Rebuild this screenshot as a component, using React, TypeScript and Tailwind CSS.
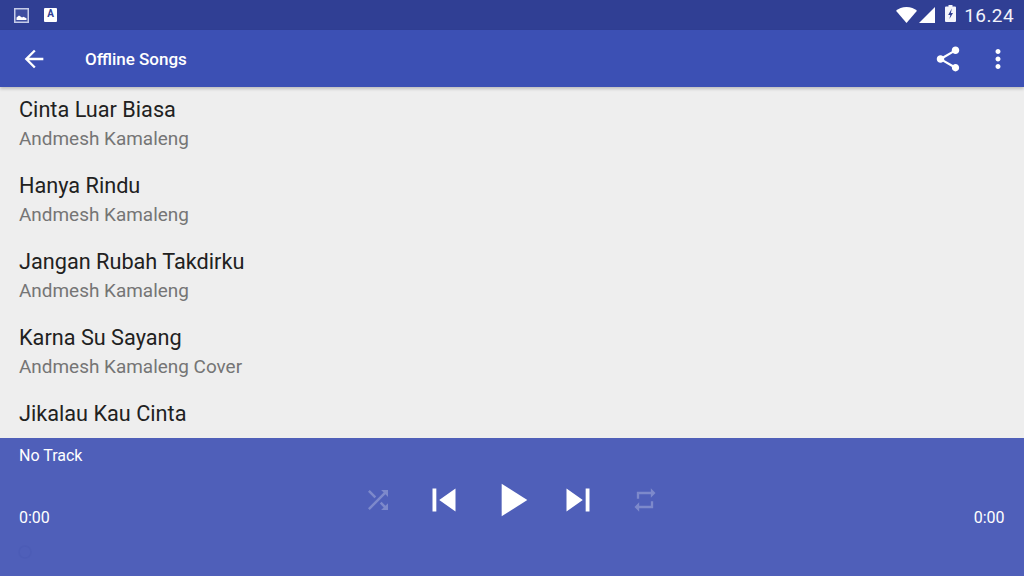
import React from "react";

const songs = [
  ["Cinta Luar Biasa", "Andmesh Kamaleng"],
  ["Hanya Rindu", "Andmesh Kamaleng"],
  ["Jangan Rubah Takdirku", "Andmesh Kamaleng"],
  ["Karna Su Sayang", "Andmesh Kamaleng Cover"],
  ["Jikalau Kau Cinta", ""],
];

export default function App() {
  return (
    <div className="w-[1024px] h-[576px] flex flex-col overflow-hidden bg-[#eeeeee] font-['Roboto',sans-serif]">
      <div className="h-[30px] shrink-0 bg-[#303f94] flex items-center pl-[14px] pr-[10px] text-white">
        <svg width="15" height="15" viewBox="0 0 15 15" className="mr-[15px]">
          <rect x="0.75" y="0.75" width="13.5" height="13.5" fill="#3f4ea0" stroke="#c5cbe8" strokeWidth="1.5" />
          <path d="M2.5 12V9.5L5 7.5l3 2 1.5-.7 3 1.5V12z" fill="#fff" />
        </svg>
        <div className="w-[13px] h-[14px] bg-white rounded-[1px] relative flex justify-center">
          <span className="text-[10px] leading-[12px] font-bold text-[#303f94]">A</span>
        </div>
        <div className="flex-1" />
        <svg width="21" height="16" viewBox="0 0 21 16" className="mr-[2px]">
          <path d="M0 3.8C2.6 1.4 6.3 0 10.5 0S18.400 1.400 21 3.800L10.500 16z" fill="#fff" />
        </svg>
        <svg width="16" height="16" viewBox="0 0 16 16" className="mr-[10px]">
          <path d="M16 0v16H0z" fill="#fff" />
        </svg>
        <svg width="11" height="17" viewBox="0 0 11 17" className="mr-[8px] mb-[3px]">
          <path d="M3.5 0h4v1.500H10a1 1 0 0 1 1 1V16a1 1 0 0 1-1 1H1a1 1 0 0 1-1-1V2.500a1 1 0 0 1 1-1h2.500z" fill="#f4f5fb" />
          <path d="M6.800 3.500 3.200 10h2.100l-.9 4L8 8H5.900z" fill="#303f94" />
        </svg>
        <span className="text-[19px] leading-none tracking-[0.4px] text-[#f2f3fa]">16.24</span>
      </div>

      <div className="h-[57px] shrink-0 bg-[#3c50b4] flex items-center text-white shadow-[0_2px_3px_rgba(0,0,0,0.2)] relative z-10">
        <svg width="28" height="28" viewBox="0 0 24 24" fill="#fff" className="ml-[20px]">
          <path d="M20 11H7.830l5.590-5.590L12 4l-8 8 8 8 1.410-1.410L7.830 13H20v-2z" />
        </svg>
        <span className="ml-[37px] mt-[1px] text-[17px] font-medium leading-none">Offline Songs</span>
        <div className="flex-1" />
        <svg width="30" height="30" viewBox="0 0 24 24" fill="#fff" className="mr-[20px]">
          <path d="M18 16.080c-.76 0-1.440.3-1.960.77L8.910 12.700c.05-.23.09-.46.09-.7s-.04-.47-.09-.7l7.050-4.110c.54.5 1.250.81 2.040.81 1.660 0 3-1.340 3-3s-1.340-3-3-3-3 1.340-3 3c0 .24.04.47.09.7L8.040 9.810C7.500 9.310 6.790 9 6 9c-1.660 0-3 1.340-3 3s1.340 3 3 3c.79 0 1.500-.31 2.040-.81l7.120 4.160c-.05.21-.08.43-.08.65 0 1.610 1.310 2.920 2.920 2.920 1.610 0 2.920-1.310 2.920-2.920s-1.310-2.920-2.920-2.920z" />
        </svg>
        <svg width="30" height="30" viewBox="0 0 24 24" fill="#fff" className="mr-[11px]">
          <path d="M12 8c1.100 0 2-.9 2-2s-.9-2-2-2-2 .9-2 2 .9 2 2 2zm0 2c-1.100 0-2 .9-2 2s.9 2 2 2 2-.9 2-2-.9-2-2-2zm0 6c-1.100 0-2 .9-2 2s.9 2 2 2 2-.9 2-2-.9-2-2-2z" />
        </svg>
      </div>

      <div className="flex-1 min-h-0 overflow-hidden pl-[19px]">
        {songs.map(([title, artist]) => (
          <div key={title} className="h-[76px] pt-[9px]">
            <div className="text-[21.7px] leading-[28px] text-[#212121]">{title}</div>
            <div className="text-[18.95px] leading-[28px] mt-[1px] text-[#757575]">{artist}</div>
          </div>
        ))}
      </div>

      <div className="h-[138px] shrink-0 bg-[#4f5fb9] text-white relative">
        <div className="pl-[19px] pt-[8px] text-[16px] leading-[19px]">No Track</div>
        <div className="flex justify-between pl-[19px] pr-[19.5px] mt-[43px] text-[16px] leading-[19px]">
          <span>0:00</span>
          <span>0:00</span>
        </div>
        <div className="absolute left-[363px] top-[33.5px] flex items-center">
          <svg width="30" height="30" viewBox="0 0 24 24" fill="#7d89cb">
            <path d="M10.590 9.170L5.410 4 4 5.410l5.170 5.170 1.420-1.410zM14.500 4l2.040 2.040L4 18.590 5.410 20 17.960 7.460 20 9.500V4h-5.500zm.33 9.410l-1.410 1.410 3.130 3.130L14.500 20H20v-5.500l-2.040 2.040-3.130-3.130z" />
          </svg>
          <svg width="46" height="46" viewBox="0 0 24 24" fill="#fff" className="ml-[28px]">
            <path d="M6 6h2v12H6zm3.500 6l8.500 6V6z" />
          </svg>
          <svg width="56" height="56" viewBox="0 0 24 24" fill="#fff" className="ml-[15.5px]">
            <path d="M8 5v14l11-7z" />
          </svg>
          <svg width="46" height="46" viewBox="0 0 24 24" fill="#fff" className="ml-[16px]">
            <path d="M6 18l8.500-6L6 6v12zM16 6v12h2V6h-2z" />
          </svg>
          <svg width="28" height="28" viewBox="0 0 24 24" fill="#7d89cb" className="ml-[30px]">
            <path d="M7 7h10v3l4-4-4-4v3H5v6h2V7zm10 10H7v-3l-4 4 4 4v-3h12v-6h-2v4z" />
          </svg>
        </div>
        <svg width="14" height="14" viewBox="0 0 14 14" fill="none" stroke="#4c5cb6" strokeWidth="1.5" className="absolute left-[18px] top-[107px]">
          <circle cx="7" cy="7" r="6" />
        </svg>
      </div>
    </div>
  );
}
